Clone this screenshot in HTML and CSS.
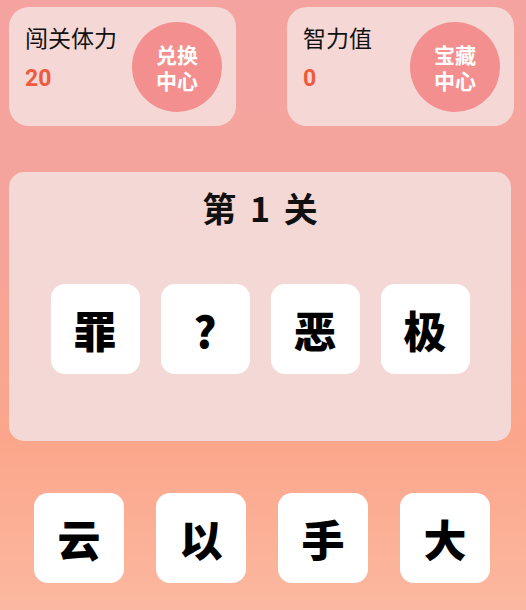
FILE: index.html
```html
<!DOCTYPE html>
<html lang="zh">
<head>
<meta charset="utf-8">
<link rel="stylesheet" href="styles.css">
</head>
<body>
<div class="page">
  <div class="stats">
    <div class="stat-card">
      <div class="stat-info">
        <div class="stat-label">闯关体力</div>
        <div class="stat-value">20</div>
      </div>
      <div class="stat-btn"><span>兑换</span><span>中心</span></div>
    </div>
    <div class="stat-card">
      <div class="stat-info">
        <div class="stat-label">智力值</div>
        <div class="stat-value">0</div>
      </div>
      <div class="stat-btn"><span>宝藏</span><span>中心</span></div>
    </div>
  </div>

  <div class="level-card">
    <div class="level-title">第 1 关</div>
    <div class="puzzle">
      <div class="tile">罪</div>
      <div class="tile">?</div>
      <div class="tile">恶</div>
      <div class="tile">极</div>
    </div>
  </div>

  <div class="options">
    <div class="tile option">云</div>
    <div class="tile option">以</div>
    <div class="tile option">手</div>
    <div class="tile option">大</div>
  </div>
</div>
</body>
</html>
```

FILE: styles.css
```css
html, body {
  margin: 0;
  padding: 0;
}
body {
  width: 526px;
  height: 610px;
  overflow: hidden;
  font-family: "Noto Sans CJK SC", "Noto Sans", sans-serif;
  background: linear-gradient(180deg, #f4a3a0 0%, #f5a49c 35%, #fba68b 72%, #fbb8a0 100%);
}
.page {
  padding: 7px 0 0 9px;
  width: 505px;
}
.stats {
  display: flex;
  justify-content: space-between;
}
.stat-card {
  width: 227px;
  height: 119px;
  box-sizing: border-box;
  background: #f5d8d5;
  border-radius: 20px;
  display: flex;
  align-items: flex-start;
  justify-content: space-between;
  padding: 15px 14px 0 16px;
}
.stat-info {
  display: flex;
  flex-direction: column;
  gap: 12px;
}
.stat-label {
  font-size: 23px;
  line-height: 30px;
  color: #111;
}
.stat-value {
  font-size: 23px;
  line-height: 30px;
  font-weight: 700;
  color: #f05a3c;
  font-family: Roboto, "Noto Sans", sans-serif;
}
.stat-btn {
  width: 90px;
  height: 90px;
  border-radius: 50%;
  background: #f38f8e;
  color: #fff;
  font-size: 21px;
  line-height: 26px;
  font-weight: 700;
  display: flex;
  flex-direction: column;
  align-items: center;
  justify-content: center;
  text-align: center;
}
.level-card {
  margin-top: 46px;
  width: 502px;
  height: 269px;
  box-sizing: border-box;
  background: #f3d8d5;
  border-radius: 15px;
  padding-top: 16px;
  display: flex;
  flex-direction: column;
  align-items: center;
}
.level-title {
  font-size: 34px;
  line-height: 40px;
  font-weight: 700;
  color: #111;
  word-spacing: 6px;
}
.puzzle {
  margin-top: 56px;
  display: flex;
  gap: 21px;
}
.tile {
  width: 89px;
  height: 90px;
  background: #fff;
  border-radius: 14px;
  display: flex;
  align-items: center;
  justify-content: center;
  font-size: 43px;
  font-weight: 900;
  color: #000;
}
.options {
  margin-top: 52px;
  width: 502px;
  display: flex;
  justify-content: center;
  gap: 32px;
  padding-left: 2px;
}
.option {
  width: 90px;
}
```
